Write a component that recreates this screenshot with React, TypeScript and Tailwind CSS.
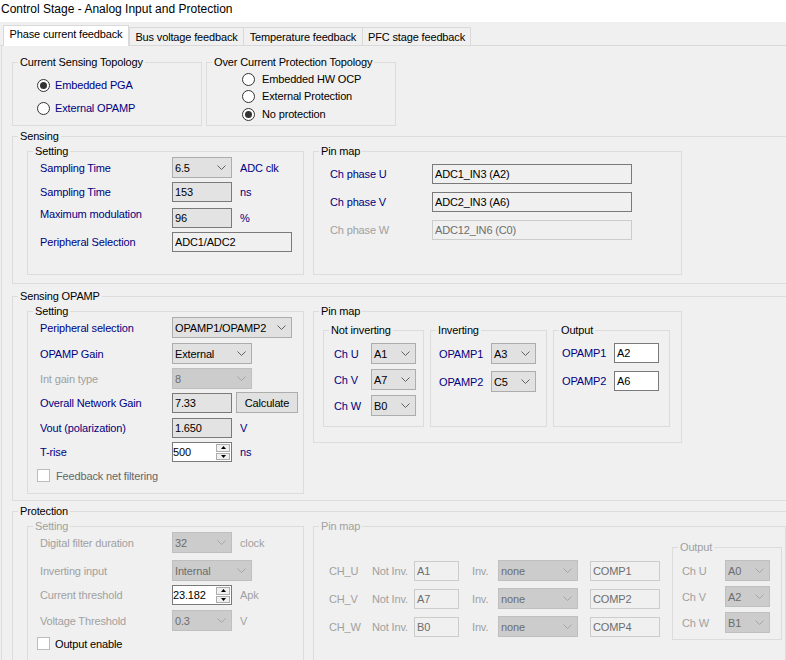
import React from 'react';

const NAVY = 'text-[#000080]';
const GRAY = 'text-[#a0a0a0]';

const Chevron: React.FC<{ color: string }> = ({ color }) => (
  <svg width="9" height="5" viewBox="0 0 9 5" className="shrink-0">
    <polyline points="0.5,0.5 4.5,4.5 8.5,0.5" fill="none" stroke={color} strokeWidth="1" />
  </svg>
);

const Group: React.FC<{ title: string; className?: string; disabled?: boolean; children?: React.ReactNode }> = ({
  title,
  className = '',
  disabled,
  children,
}) => (
  <fieldset className={`border border-[#dcdcdc] ${className}`}>
    <legend className={`ml-[5px] px-[2px] leading-[12px] whitespace-nowrap ${disabled ? GRAY : 'text-black'}`}>{title}</legend>
    {children}
  </fieldset>
);

const Combo: React.FC<{ value: string; w: string; disabled?: boolean }> = ({ value, w, disabled }) => (
  <div
    className={`${w} h-[21px] shrink-0 flex items-center justify-between border pl-[2px] pr-[5px] ${
      disabled ? 'bg-[#cccccc] border-[#bfbfbf] text-[#6d6d6d]' : 'bg-[#e1e1e1] border-[#adadad] text-black'
    }`}
  >
    <span className="whitespace-nowrap">{value}</span>
    <Chevron color={disabled ? '#a6a6a6' : '#606060'} />
  </div>
);

type Kind = 'ro' | 'plain' | 'white' | 'off';

const TextBox: React.FC<{ value: string; w: string; kind: Kind }> = ({ value, w, kind }) => {
  const look = {
    ro: 'bg-[#e3e3e3] border-[#7a7a7a] text-black',
    plain: 'bg-[#f0f0f0] border-[#7a7a7a] text-black',
    white: 'bg-white border-[#7a7a7a] text-black',
    off: 'bg-[#f0f0f0] border-[#cccccc] text-[#6d6d6d]',
  }[kind];
  return (
    <div className={`${w} h-[20px] shrink-0 flex items-center border pl-[2px] whitespace-nowrap ${look}`}>{value}</div>
  );
};

const Spin: React.FC<{ value: string }> = ({ value }) => (
  <div className="w-[60px] h-[20px] shrink-0 flex border border-[#7a7a7a] bg-white">
    <span className="flex-1 flex items-center">{value}</span>
    <div className="w-[14px] flex flex-col my-[1px] mr-[1px] gap-px">
      <div className="flex-1 flex items-center justify-center border border-[#adadad] bg-[#f0f0f0]">
        <svg width="5" height="3" viewBox="0 0 5 3">
          <polygon points="2.5,0 5,3 0,3" fill="#000" />
        </svg>
      </div>
      <div className="flex-1 flex items-center justify-center border border-[#adadad] bg-[#f0f0f0]">
        <svg width="5" height="3" viewBox="0 0 5 3">
          <polygon points="0,0 5,0 2.5,3" fill="#000" />
        </svg>
      </div>
    </div>
  </div>
);

const Radio: React.FC<{ checked?: boolean }> = ({ checked }) => (
  <span className="w-[13px] h-[13px] shrink-0 rounded-full border border-[#333333] bg-white flex items-center justify-center">
    {checked && <span className="w-[7px] h-[7px] rounded-full bg-[#333333]" />}
  </span>
);

const Check: React.FC = () => <span className="w-[13px] h-[13px] shrink-0 border border-[#bcbcbc] bg-white" />;

const Tab: React.FC<{ label: string; className: string }> = ({ label, className }) => (
  <div className={`flex justify-center whitespace-nowrap border-t border-[#d9d9d9] ${className}`}>{label}</div>
);

export default function App() {
  return (
    <div className="w-[786px] h-[660px] overflow-hidden bg-[#f0f0f0] text-[11px] leading-[12px] tracking-[-0.15px] text-black font-['Liberation_Sans',Arial,sans-serif]">
      <div className="h-[22px] bg-white text-[12px] leading-[18px] tracking-normal pl-[1px]">
        Control Stage - Analog Input and Protection
      </div>

      {/* tab strip */}
      <div className="h-[24px] flex items-end border-b border-[#d9d9d9] pl-[3px]">
        <Tab label="Phase current feedback" className="relative z-10 -mb-px h-[21px] w-[126px] bg-white border-x pt-[2px]" />
        <Tab label="Bus voltage feedback" className="h-[18px] w-[115px] border-x pt-[3px]" />
        <Tab label="Temperature feedback" className="h-[18px] w-[119px] border-r pt-[3px]" />
        <Tab label="PFC stage feedback" className="h-[18px] w-[108px] border-r pt-[3px]" />
      </div>

      {/* tab page */}
      <div className="ml-px h-[614px] border-l border-[#dcdcdc] pl-[10px] pt-[10px]">
        <div className="flex gap-[4px]">
          <Group title="Current Sensing Topology" className="w-[190px] h-[70px]">
            <div className="pl-[24px] pt-[10px] flex flex-col gap-[9px]">
              <div className="flex items-center h-[14px]">
                <Radio checked />
                <span className={`ml-[5px] ${NAVY}`}>Embedded PGA</span>
              </div>
              <div className="flex items-center h-[14px]">
                <Radio />
                <span className={`ml-[5px] ${NAVY}`}>External OPAMP</span>
              </div>
            </div>
          </Group>
          <Group title="Over Current Protection Topology" className="w-[190px] h-[70px]">
            <div className="pl-[35px] pt-[4px]">
              <div className="flex items-center h-[14px]">
                <Radio />
                <span className="ml-[7px]">Embedded HW OCP</span>
              </div>
              <div className="flex items-center h-[14px] mt-[3px]">
                <Radio />
                <span className="ml-[7px]">External Protection</span>
              </div>
              <div className="flex items-center h-[14px] mt-[4px]">
                <Radio checked />
                <span className="ml-[7px]">No protection</span>
              </div>
            </div>
          </Group>
        </div>

        {/* Sensing */}
        <Group title="Sensing" className="w-[800px] h-[154px] mt-[4px]">
          <div className="flex gap-[9px] pl-[14px] pt-[3px]">
            <Group title="Setting" className="w-[277px] h-[130px]">
              <div className="pl-[12px]">
                <div className="flex items-center h-[21px]">
                  <span className={`w-[132px] shrink-0 ${NAVY}`}>Sampling Time</span>
                  <Combo value="6.5" w="w-[60px]" />
                  <span className={`ml-[8px] ${NAVY}`}>ADC clk</span>
                </div>
                <div className="flex items-center h-[20px] mt-[4px]">
                  <span className={`w-[132px] shrink-0 ${NAVY}`}>Sampling Time</span>
                  <TextBox value="153" w="w-[60px]" kind="ro" />
                  <span className={`ml-[8px] ${NAVY}`}>ns</span>
                </div>
                <div className="flex items-center h-[20px] mt-[6px]">
                  <span className={`w-[132px] shrink-0 mb-[9px] ${NAVY}`}>Maximum modulation</span>
                  <TextBox value="96" w="w-[60px]" kind="ro" />
                  <span className={`ml-[8px] ${NAVY}`}>%</span>
                </div>
                <div className="flex items-center h-[20px] mt-[4px]">
                  <span className={`w-[132px] shrink-0 ${NAVY}`}>Peripheral Selection</span>
                  <TextBox value="ADC1/ADC2" w="w-[120px]" kind="plain" />
                </div>
              </div>
            </Group>
            <Group title="Pin map" className="w-[369px] h-[130px]">
              <div className="pl-[16px] pt-[7px] flex flex-col gap-[8px]">
                <div className="flex items-center h-[20px]">
                  <span className={`w-[102px] shrink-0 ${NAVY}`}>Ch phase U</span>
                  <TextBox value="ADC1_IN3 (A2)" w="w-[200px]" kind="plain" />
                </div>
                <div className="flex items-center h-[20px]">
                  <span className={`w-[102px] shrink-0 ${NAVY}`}>Ch phase V</span>
                  <TextBox value="ADC2_IN3 (A6)" w="w-[200px]" kind="plain" />
                </div>
                <div className="flex items-center h-[20px]">
                  <span className={`w-[102px] shrink-0 ${GRAY}`}>Ch phase W</span>
                  <TextBox value="ADC12_IN6 (C0)" w="w-[200px]" kind="off" />
                </div>
              </div>
            </Group>
          </div>
        </Group>

        {/* Sensing OPAMP */}
        <Group title="Sensing OPAMP" className="w-[800px] h-[211px] mt-[6px]">
          <div className="flex gap-[9px] pl-[14px] pt-[3px] items-start">
            <Group title="Setting" className="w-[277px] h-[189px]">
              <div className="pl-[12px]">
                <div className="flex items-center h-[21px]">
                  <span className={`w-[132px] shrink-0 ${NAVY}`}>Peripheral selection</span>
                  <Combo value="OPAMP1/OPAMP2" w="w-[120px]" />
                </div>
                <div className="flex items-center h-[21px] mt-[5px]">
                  <span className={`w-[132px] shrink-0 ${NAVY}`}>OPAMP Gain</span>
                  <Combo value="External" w="w-[80px]" />
                </div>
                <div className="flex items-center h-[21px] mt-[4px]">
                  <span className={`w-[132px] shrink-0 ${GRAY}`}>Int gain type</span>
                  <Combo value="8" w="w-[80px]" disabled />
                </div>
                <div className="flex items-center h-[21px] mt-[3px]">
                  <span className={`w-[132px] shrink-0 ${NAVY}`}>Overall Network Gain</span>
                  <TextBox value="7.33" w="w-[60px]" kind="ro" />
                  <button className="ml-[4px] w-[62px] h-[21px] border border-[#adadad] bg-[#e1e1e1] flex items-center justify-center">
                    Calculate
                  </button>
                </div>
                <div className="flex items-center h-[20px] mt-[5px]">
                  <span className={`w-[132px] shrink-0 ${NAVY}`}>Vout (polarization)</span>
                  <TextBox value="1.650" w="w-[60px]" kind="ro" />
                  <span className={`ml-[8px] ${NAVY}`}>V</span>
                </div>
                <div className="flex items-center h-[20px] mt-[4px]">
                  <span className={`w-[132px] shrink-0 ${NAVY}`}>T-rise</span>
                  <Spin value="500" />
                  <span className={`ml-[8px] ${NAVY}`}>ns</span>
                </div>
                <div className="flex items-center h-[13px] mt-[7px] -ml-[3px]">
                  <Check />
                  <span className="ml-[6px] text-[#666666]">Feedback net filtering</span>
                </div>
              </div>
            </Group>
            <Group title="Pin map" className="w-[369px] h-[138px]">
              <div className="flex gap-[6px] pl-[9px] pt-[7px]">
                <Group title="Not inverting" className="w-[101px] h-[103px]">
                  <div className="pl-[10px] pt-[7px]">
                    {[
                      ['Ch U', 'A1', ''],
                      ['Ch V', 'A7', 'mt-[5px]'],
                      ['Ch W', 'B0', 'mt-[5px]'],
                    ].map(([l, v, m]) => (
                      <div key={l} className={`flex items-center h-[21px] ${m}`}>
                        <span className={`w-[37px] shrink-0 ${NAVY}`}>{l}</span>
                        <Combo value={v} w="w-[45px]" />
                      </div>
                    ))}
                  </div>
                </Group>
                <Group title="Inverting" className="w-[117px] h-[103px]">
                  <div className="pl-[8px] pt-[7px]">
                    <div className="flex items-center h-[21px]">
                      <span className={`w-[52px] shrink-0 ${NAVY}`}>OPAMP1</span>
                      <Combo value="A3" w="w-[45px]" />
                    </div>
                    <div className="flex items-center h-[21px] mt-[7px]">
                      <span className={`w-[52px] shrink-0 ${NAVY}`}>OPAMP2</span>
                      <Combo value="C5" w="w-[45px]" />
                    </div>
                  </div>
                </Group>
                <Group title="Output" className="w-[117px] h-[103px]">
                  <div className="pl-[8px] pt-[7px]">
                    <div className="flex items-center h-[20px]">
                      <span className={`w-[52px] shrink-0 ${NAVY}`}>OPAMP1</span>
                      <TextBox value="A2" w="w-[45px]" kind="white" />
                    </div>
                    <div className="flex items-center h-[20px] mt-[8px]">
                      <span className={`w-[52px] shrink-0 ${NAVY}`}>OPAMP2</span>
                      <TextBox value="A6" w="w-[45px]" kind="white" />
                    </div>
                  </div>
                </Group>
              </div>
            </Group>
          </div>
        </Group>

        {/* Protection */}
        <Group title="Protection" className="w-[800px] h-[200px] mt-[4px]">
          <div className="flex gap-[9px] pl-[14px] pt-[3px] items-start">
            <Group title="Setting" disabled className="w-[277px] h-[160px]">
              <div className="pl-[12px]">
                <div className="flex items-center h-[21px]">
                  <span className={`w-[132px] shrink-0 ${GRAY}`}>Digital filter duration</span>
                  <Combo value="32" w="w-[60px]" disabled />
                  <span className={`ml-[8px] ${GRAY}`}>clock</span>
                </div>
                <div className="flex items-center h-[21px] mt-[7px]">
                  <span className={`w-[132px] shrink-0 ${GRAY}`}>Inverting input</span>
                  <Combo value="Internal" w="w-[80px]" disabled />
                </div>
                <div className="flex items-center h-[20px] mt-[4px]">
                  <span className={`w-[132px] shrink-0 ${GRAY}`}>Current threshold</span>
                  <Spin value="23.182" />
                  <span className={`ml-[8px] ${GRAY}`}>Apk</span>
                </div>
                <div className="flex items-center h-[21px] mt-[5px]">
                  <span className={`w-[132px] shrink-0 ${GRAY}`}>Voltage Threshold</span>
                  <Combo value="0.3" w="w-[60px]" disabled />
                  <span className={`ml-[8px] ${GRAY}`}>V</span>
                </div>
                <div className="flex items-center h-[13px] mt-[6px] -ml-[3px]">
                  <Check />
                  <span className="ml-[5px]">Output enable</span>
                </div>
              </div>
            </Group>
            <Group title="Pin map" disabled className="w-[473px] h-[160px]">
              <div className="flex items-start">
                <div className="pl-[15px] pt-[28px] flex flex-col gap-[7px]">
                  {[
                    ['CH_U', 'A1', 'COMP1'],
                    ['CH_V', 'A7', 'COMP2'],
                    ['CH_W', 'B0', 'COMP4'],
                  ].map(([ch, pin, comp]) => (
                    <div key={ch} className="flex items-center h-[21px]">
                      <span className={`w-[43px] shrink-0 ${GRAY}`}>{ch}</span>
                      <span className={`w-[42px] shrink-0 ${GRAY}`}>Not Inv.</span>
                      <TextBox value={pin} w="w-[45px]" kind="off" />
                      <span className={`ml-[13px] w-[26px] shrink-0 ${GRAY}`}>Inv.</span>
                      <Combo value="none" w="w-[80px]" disabled />
                      <div className="ml-[12px]">
                        <TextBox value={comp} w="w-[70px]" kind="off" />
                      </div>
                    </div>
                  ))}
                </div>
                <Group title="Output" disabled className="w-[110px] h-[99px] ml-[12px] mt-[9px]">
                  <div className="pl-[9px] pt-[7px]">
                    {[
                      ['Ch U', 'A0', ''],
                      ['Ch V', 'A2', 'mt-[5px]'],
                      ['Ch W', 'B1', 'mt-[5px]'],
                    ].map(([l, v, m]) => (
                      <div key={l} className={`flex items-center h-[21px] ${m}`}>
                        <span className={`w-[43px] shrink-0 ${GRAY}`}>{l}</span>
                        <Combo value={v} w="w-[45px]" disabled />
                      </div>
                    ))}
                  </div>
                </Group>
              </div>
            </Group>
          </div>
        </Group>
      </div>
    </div>
  );
}
